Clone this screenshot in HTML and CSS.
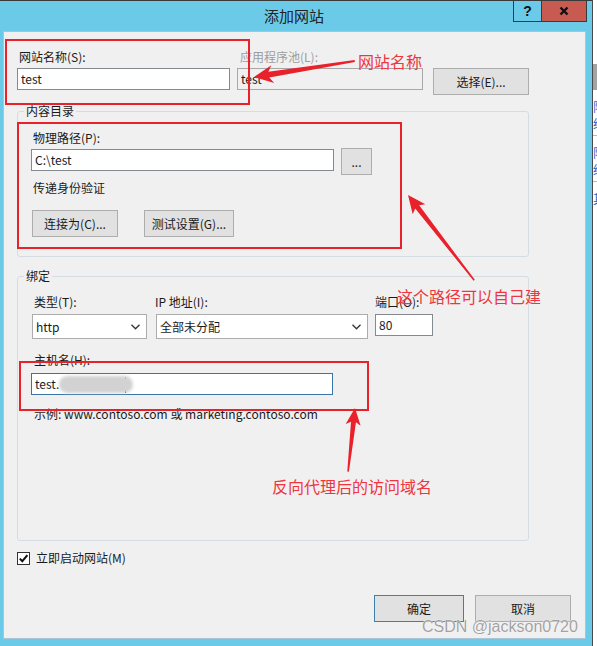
FILE: index.html
```html
<!DOCTYPE html>
<html lang="zh-CN">
<head>
    <meta charset="UTF-8">
    <title>添加网站</title>
    <link rel="stylesheet" href="styles.css">
</head>
<body>
    <div class="screen">
        <div class="window">
            <div class="titlebar">
                <div class="title">添加网站</div>
                <div class="caption">
                    <span class="cap help">?</span>
                    <span class="cap close">
                        <svg width="10" height="10" viewBox="0 0 10 10"><path d="M1.5 1.5 L8.5 8.5 M8.5 1.5 L1.5 8.5" stroke="#111" stroke-width="2.4"/></svg>
                    </span>
                </div>
            </div>

            <div class="client">
                <div class="site-row">
                    <div class="lbl">网站名称(S):</div>
                    <div class="lbl disabled">应用程序池(L):</div>
                    <div></div>
                    <div class="textbox">test</div>
                    <div class="textbox readonly">test</div>
                    <button class="btn btn-select">选择(E)...</button>
                </div>

                <fieldset class="group group-content">
                    <legend>内容目录</legend>
                    <div class="group-body">
                        <div class="lbl">物理路径(P):</div>
                        <div class="path-row">
                            <div class="textbox path">C:\test</div>
                            <button class="btn btn-browse">...</button>
                        </div>
                        <div class="lbl auth">传递身份验证</div>
                        <div class="btn-row">
                            <button class="btn btn-connect">连接为(C)...</button>
                            <button class="btn btn-test">测试设置(G)...</button>
                        </div>
                    </div>
                </fieldset>

                <fieldset class="group group-binding">
                    <legend>绑定</legend>
                    <div class="binding-body">
                        <div class="binding-grid">
                            <div class="lbl">类型(T):</div>
                            <div class="lbl ip-lbl">IP 地址(I):</div>
                            <div class="lbl port-lbl">端口(O):</div>
                            <div class="select sel-type">
                                <span>http</span>
                                <svg width="9" height="6" viewBox="0 0 9 6"><path d="M0.5 0.8 L4.5 4.8 L8.5 0.8" fill="none" stroke="#333" stroke-width="1.3"/></svg>
                            </div>
                            <div class="select sel-ip">
                                <span>全部未分配</span>
                                <svg width="9" height="6" viewBox="0 0 9 6"><path d="M0.5 0.8 L4.5 4.8 L8.5 0.8" fill="none" stroke="#333" stroke-width="1.3"/></svg>
                            </div>
                            <div class="textbox port">80</div>
                        </div>
                        <div class="lbl host-lbl">主机名(H):</div>
                        <div class="textbox host">test.<span class="smudge"></span><span class="caret"></span></div>
                        <div class="hint">示例: www.contoso.com 或 marketing.contoso.com</div>
                    </div>
                </fieldset>

                <div class="check-row">
                    <span class="checkbox">
                        <svg width="11" height="11" viewBox="0 0 11 11"><path d="M1.8 5.6 L4.3 8.2 L9.4 2.2" fill="none" stroke="#111" stroke-width="2"/></svg>
                    </span>
                    <span>立即启动网站(M)</span>
                </div>

                <div class="footer-btns">
                    <button class="btn btn-ok">确定</button>
                    <button class="btn btn-cancel">取消</button>
                </div>
            </div>
        </div>

        <div class="edge">
            <div class="edge-thumb"></div>
            <div class="edge-txt">限<br>级</div>
            <div class="edge-rule"></div>
            <div class="edge-txt">限<br>级</div>
            <div class="edge-rule"></div>
            <div class="edge-txt">其</div>
        </div>

        <!-- annotations drawn on top of the dialog -->
        <svg class="marks" width="597" height="646" viewBox="0 0 597 646">
            <g fill="none" stroke="#e8212a" stroke-width="2">
                <rect x="6" y="40" width="243" height="64"/>
                <rect x="18" y="123" width="383" height="125"/>
                <rect x="20" y="362" width="348" height="48"/>
            </g>
            <g fill="#e8212a">
                <polygon transform="translate(254 77) rotate(171)" points="0,0 -19,-9 -15,-3 -102,-1 -102,1 -15,3 -19,9"/>
                <polygon transform="translate(408 195) rotate(-127.8)" points="0,0 -18,-8 -15,-2.5 -108,-0.8 -108,0.8 -15,2.5 -18,8"/>
                <polygon transform="translate(355 408) rotate(-83.8)" points="0,0 -17,-7.5 -14,-2.5 -64,-0.8 -64,0.8 -14,2.5 -17,7.5"/>
            </g>
        </svg>
        <span class="note note-name">网站名称</span>
        <span class="note note-path">这个路径可以自己建</span>
        <span class="note note-host">反向代理后的访问域名</span>
        <span class="watermark">CSDN @jackson0720</span>
    </div>
</body>
</html>
```

FILE: styles.css
```css
* {
    box-sizing: border-box;
}

body {
    margin: 0;
    width: 597px;
    height: 646px;
    overflow: hidden;
    background-color: #6acae8;
    font-family: "Noto Sans CJK SC", "Noto Sans", sans-serif;
    font-size: 12px;
    color: #1a1a1a;
}

.screen {
    position: relative;
    display: flex;
    width: 597px;
    height: 646px;
}

/* window frame */
.window {
    width: 592px;
    height: 646px;
    background-color: #6acae8;
    border-top: 1px solid #3a3a3a;
}

.titlebar {
    display: flex;
    align-items: flex-start;
    height: 30px;
    padding-right: 5px;
}
.title {
    flex: 1;
    padding-left: 75px;
    text-align: center;
    font-size: 15px;
    line-height: 30px;
    color: #222;
}
.caption {
    display: flex;
    margin-top: -1px;
}
.cap {
    display: flex;
    align-items: center;
    justify-content: center;
    height: 22px;
    border: 1px solid #3a3a3a;
}
.help {
    width: 28px;
    border-right: none;
    font-family: "Liberation Sans", sans-serif;
    font-weight: bold;
    font-size: 14px;
    color: #111;
}
.close {
    width: 46px;
    background-color: #c75b51;
}

.client {
    margin: 0 6px 0 3px;
    height: 608px;
    background-color: #f0f0f0;
    border: 1px solid #a9c4d4;
    padding: 17px 0 0 13px;
}

/* common controls */
.lbl {
    line-height: 16px;
    padding-left: 2px;
    white-space: nowrap;
}
.lbl.disabled {
    color: #9d9d9d;
    padding-left: 3px;
}

.textbox {
    height: 22px;
    border: 1px solid #858a91;
    background-color: #fff;
    padding: 0 3px;
    line-height: 20px;
    white-space: nowrap;
}
.textbox.readonly {
    background-color: #f0f0f0;
    border-color: #a8a8a8;
}

.btn {
    height: 27px;
    padding: 0;
    font-family: inherit;
    font-size: 12px;
    color: #1a1a1a;
    background-color: #e1e1e1;
    border: 1px solid #adadad;
}

.select {
    display: flex;
    align-items: center;
    justify-content: space-between;
    height: 25px;
    padding: 0 6px 0 3px;
    background-color: #fff;
    border: 1px solid #acacac;
}

/* first row */
.site-row {
    display: grid;
    grid-template-columns: 213px 186px 99px;
    column-gap: 7px;
    row-gap: 3px;
    align-items: start;
}
.btn-select {
    justify-self: end;
    width: 96px;
}

/* group boxes */
.group {
    width: 512px;
    margin: 0;
    padding: 0;
    border: 1px solid #d5dde2;
    border-radius: 3px;
}
.group legend {
    margin-left: 6px;
    padding: 0 2px;
    line-height: 16px;
}
.group-content {
    margin-top: 8px;
}
.group-body {
    padding: 11px 0 19px 13px;
}
.path-row {
    display: flex;
    align-items: flex-start;
    gap: 7px;
    margin-top: 2px;
}
.path {
    width: 303px;
    margin-top: 1px;
}
.btn-browse {
    width: 31px;
}
.auth {
    margin-top: 5px;
}
.btn-row {
    display: flex;
    gap: 26px;
    margin-top: 14px;
    padding-left: 1px;
}
.btn-connect {
    width: 86px;
}
.btn-test {
    width: 90px;
}

.group-binding {
    margin-top: 11px;
}
.binding-body {
    padding: 10px 0 118px 14px;
}
.binding-grid {
    display: grid;
    grid-template-columns: 124px 219px 58px;
    row-gap: 4px;
    align-items: start;
}
.ip-lbl {
    padding-left: 0;
    margin-left: -1px;
}
.port-lbl {
    padding-left: 0;
}
.sel-type {
    width: 115px;
}
.sel-ip {
    width: 212px;
}
.port {
    width: 58px;
}
.host-lbl {
    margin-top: 13px;
}
.host {
    width: 302px;
    margin: 5px 0 0 -1px;
    border-color: #3b74a6;
}
.smudge {
    display: inline-block;
    width: 74px;
    height: 17px;
    vertical-align: middle;
    margin-top: -2px;
    background-color: #d2d2d2;
    border-radius: 9px;
    filter: blur(1.5px);
}
.caret {
    display: inline-block;
    width: 1px;
    height: 16px;
    margin-left: -8px;
    margin-top: -2px;
    vertical-align: middle;
    background-color: #222;
}
.hint {
    margin-top: 11px;
    line-height: 16px;
    padding-left: 2px;
    white-space: nowrap;
}

/* bottom */
.check-row {
    display: flex;
    align-items: center;
    gap: 6px;
    margin-top: 9px;
    line-height: 16px;
}
.checkbox {
    display: flex;
    align-items: center;
    justify-content: center;
    width: 13px;
    height: 13px;
    background-color: #fff;
    border: 1px solid #333;
}

.footer-btns {
    display: flex;
    justify-content: flex-end;
    gap: 11px;
    margin: 29px 14px 0 0;
}
.btn-ok {
    width: 90px;
    border-color: #3c7fb1;
}
.btn-cancel {
    width: 96px;
}

/* neighbouring window edge */
.edge {
    width: 5px;
    height: 646px;
    overflow: hidden;
    background-color: #fff;
    border-left: 1px solid #4a4a4a;
}
.edge-thumb {
    height: 26px;
    margin-top: 64px;
    background-color: #a3a3a3;
}
.edge-txt {
    margin-top: 8px;
    line-height: 17px;
    color: #1f64c8;
    white-space: nowrap;
}
.edge-rule {
    height: 1px;
    margin-top: 3px;
    background-color: #b8b8b8;
}

/* annotations */
.marks {
    position: absolute;
    left: 0;
    top: 0;
    pointer-events: none;
}
.note {
    position: absolute;
    font-size: 16px;
    line-height: 20px;
    color: #ee3540;
    white-space: nowrap;
}
.note-name {
    left: 358px;
    top: 51px;
}
.note-path {
    left: 397px;
    top: 286px;
}
.note-host {
    left: 272px;
    top: 476px;
}
.watermark {
    position: absolute;
    left: 422px;
    top: 617px;
    font-family: "Liberation Sans", sans-serif;
    font-size: 16px;
    line-height: 20px;
    color: #a2a2a2;
    text-shadow: 0 0 1px #fff, 0 0 1px #fff;
    white-space: nowrap;
}
```
